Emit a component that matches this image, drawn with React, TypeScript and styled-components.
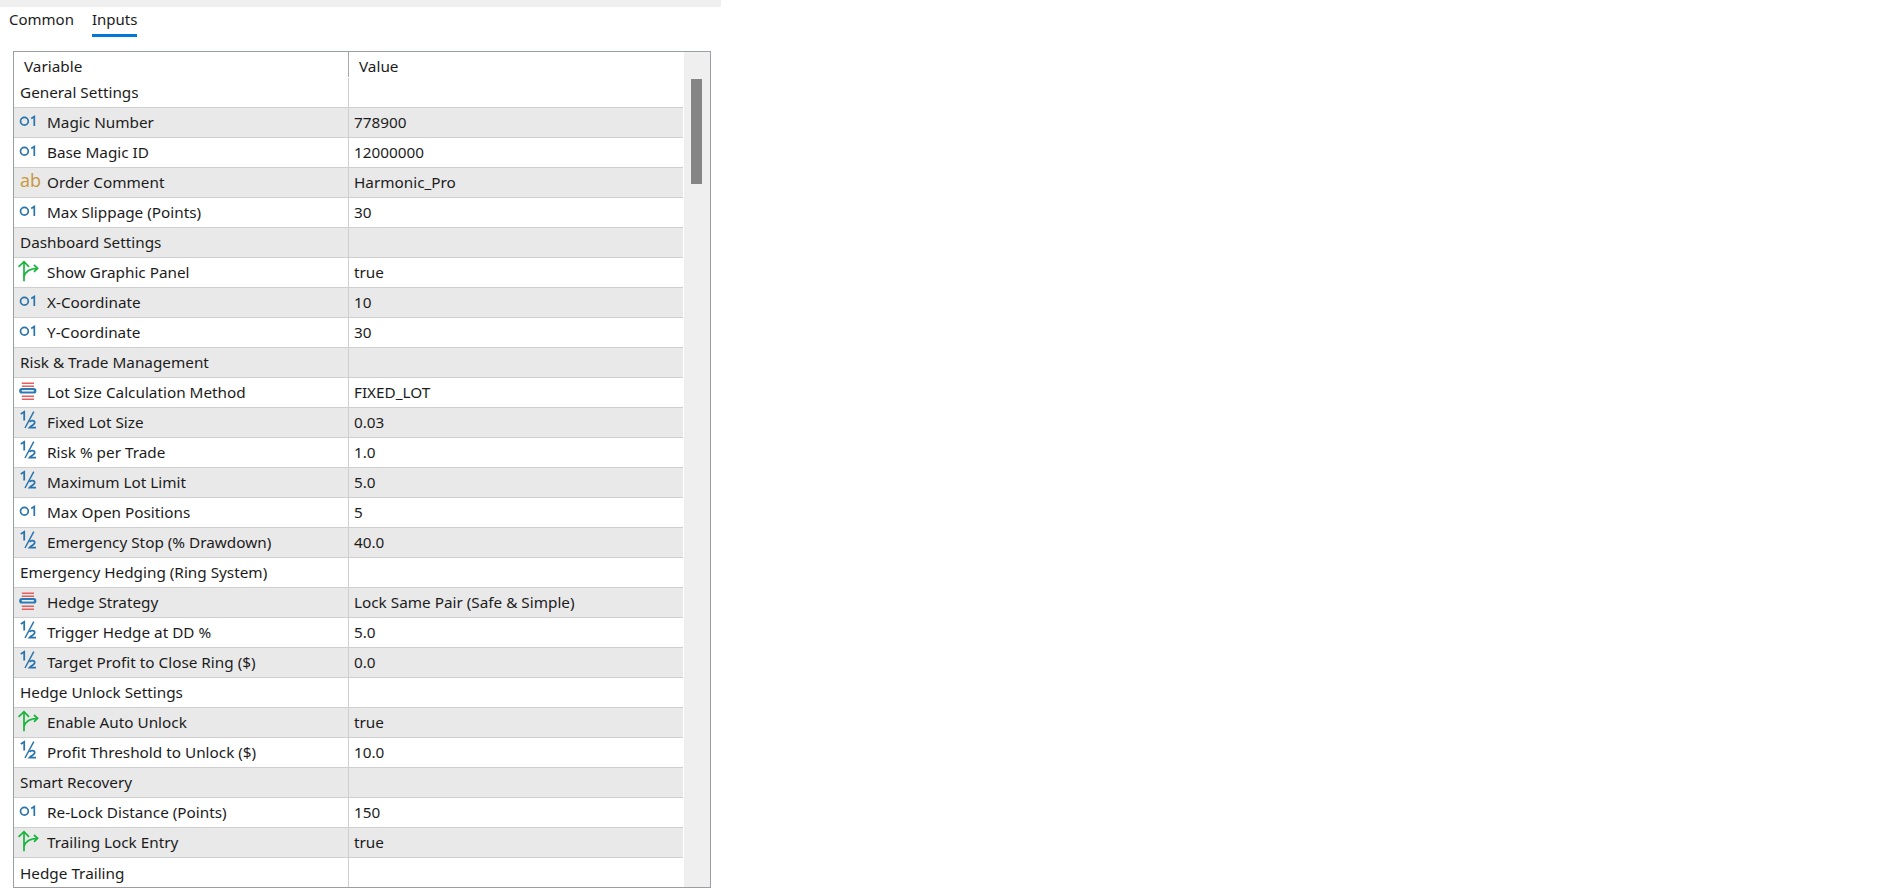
import React from 'react';
import styled, { createGlobalStyle } from 'styled-components';

type Kind = 'int' | 'text' | 'bool' | 'enum' | 'frac';

interface Item {
	label: string;
	value?: string;
	kind?: Kind;
}

const items: Item[] = [
	{ label: 'General Settings' },
	{ label: 'Magic Number', value: '778900', kind: 'int' },
	{ label: 'Base Magic ID', value: '12000000', kind: 'int' },
	{ label: 'Order Comment', value: 'Harmonic_Pro', kind: 'text' },
	{ label: 'Max Slippage (Points)', value: '30', kind: 'int' },
	{ label: 'Dashboard Settings' },
	{ label: 'Show Graphic Panel', value: 'true', kind: 'bool' },
	{ label: 'X-Coordinate', value: '10', kind: 'int' },
	{ label: 'Y-Coordinate', value: '30', kind: 'int' },
	{ label: 'Risk & Trade Management' },
	{ label: 'Lot Size Calculation Method', value: 'FIXED_LOT', kind: 'enum' },
	{ label: 'Fixed Lot Size', value: '0.03', kind: 'frac' },
	{ label: 'Risk % per Trade', value: '1.0', kind: 'frac' },
	{ label: 'Maximum Lot Limit', value: '5.0', kind: 'frac' },
	{ label: 'Max Open Positions', value: '5', kind: 'int' },
	{ label: 'Emergency Stop (% Drawdown)', value: '40.0', kind: 'frac' },
	{ label: 'Emergency Hedging (Ring System)' },
	{ label: 'Hedge Strategy', value: 'Lock Same Pair (Safe & Simple)', kind: 'enum' },
	{ label: 'Trigger Hedge at DD %', value: '5.0', kind: 'frac' },
	{ label: 'Target Profit to Close Ring ($)', value: '0.0', kind: 'frac' },
	{ label: 'Hedge Unlock Settings' },
	{ label: 'Enable Auto Unlock', value: 'true', kind: 'bool' },
	{ label: 'Profit Threshold to Unlock ($)', value: '10.0', kind: 'frac' },
	{ label: 'Smart Recovery' },
	{ label: 'Re-Lock Distance (Points)', value: '150', kind: 'int' },
	{ label: 'Trailing Lock Entry', value: 'true', kind: 'bool' },
	{ label: 'Hedge Trailing' },
];

function KindIcon({ kind }: { kind: Kind }): JSX.Element {
	if (kind === 'text') {
		return <AbGlyph>ab</AbGlyph>;
	}
	if (kind === 'int') {
		return (
			<svg width="20" height="20" viewBox="0 0 20 20" fill="none" stroke="#2a74ad" strokeWidth="1.7">
				<circle cx="4.4" cy="9.25" r="3.9" />
				<path d="M11.2 6.4 L14.3 4.6 V14" />
			</svg>
		);
	}
	if (kind === 'bool') {
		return (
			<svg width="22" height="24" viewBox="0 0 22 24" fill="none" stroke="#18b53c" strokeWidth="1.7">
				<path d="M4 21.3 V1.6 M-1.4 6.8 L4 1.6 L9 6.8" />
				<path d="M4 16.5 C5.5 11 9.5 8.5 17.6 8.3 M14 5 L17.6 8.3 L14 11.8" />
			</svg>
		);
	}
	if (kind === 'enum') {
		return (
			<svg width="20" height="22" viewBox="0 0 20 22" fill="none">
				<path d="M1.8 2.3 H14 M1.8 5.3 H14 M1.8 15.3 H14 M1.8 18.3 H14" stroke="#e2615f" strokeWidth="1.4" />
				<rect x="-0.8" y="7" width="17.2" height="5.6" rx="2.6" fill="#2a7ab5" />
				<rect x="1.8" y="9.1" width="12" height="1.4" fill="#ffffff" />
			</svg>
		);
	}
	return (
		<svg width="20" height="22" viewBox="0 0 20 22" fill="none" stroke="#2a74ad" strokeWidth="1.8">
			<path d="M0.8 3 L4.2 0.8 V9.6" />
			<path d="M13.8 0.6 L5 17" strokeWidth="1.5" />
			<path d="M9.6 11 C11 8.8 15 9.4 14.6 12 C14.2 13.8 11 15 9.6 16.6 H16" />
		</svg>
	);
}

export default function App(): JSX.Element {
	return (
		<Page>
			<GlobalStyle />
			<TopStrip />
			<Tabs>
				<Tab>Common</Tab>
				<Tab $active>Inputs</Tab>
			</Tabs>
			<Frame>
				<Table>
					<HeaderRow>
						<HeaderCell>Variable</HeaderCell>
						<HeaderCell>Value</HeaderCell>
					</HeaderRow>
					{items.map((item, index) => (
						<Row key={item.label} $shaded={index % 2 === 1}>
							<NameCell>
								{item.kind && (
									<IconSlot>
										<KindIcon kind={item.kind} />
									</IconSlot>
								)}
								{item.label}
							</NameCell>
							<ValueCell>{item.value}</ValueCell>
						</Row>
					))}
				</Table>
				<ScrollTrack>
					<ScrollThumb />
				</ScrollTrack>
			</Frame>
		</Page>
	);
}

const GlobalStyle = createGlobalStyle`
	html, body {
		margin: 0;
		padding: 0;
		background: #ffffff;
	}
	body {
		font-family: "Noto Sans", "Open Sans", sans-serif;
		font-size: 15.3px;
		color: #1c1c1c;
	}
`;

const Page = styled.div`
	width: 721px;
	height: 894px;
	overflow: hidden;
`;

const TopStrip = styled.div`
	height: 7px;
	background: #efefef;
`;

const Tabs = styled.nav`
	display: flex;
	gap: 18px;
	padding-left: 9px;
	height: 30px;
	margin-bottom: 14px;
	font-size: 15px;
`;

const Tab = styled.div<{ $active?: boolean }>`
	box-sizing: border-box;
	height: 30px;
	line-height: 24px;
	border-bottom: 3px solid ${(p) => (p.$active ? '#0078d7' : 'transparent')};
`;

const Frame = styled.div`
	box-sizing: border-box;
	width: 698px;
	height: 837px;
	margin-left: 13px;
	border: 1.5px solid #9b9ea6;
	display: flex;
	overflow: hidden;
`;

const Table = styled.div`
	width: 669px;
	flex: none;
`;

const HeaderRow = styled.div`
	display: grid;
	grid-template-columns: 334px 1fr;
	height: 26px;
`;

const HeaderCell = styled.div`
	padding: 1px 0 0 10px;
	line-height: 26px;
	height: 24px;
	& + & {
		border-left: 1px solid #a8a8a8;
	}
`;

const Row = styled.div<{ $shaded: boolean }>`
	box-sizing: border-box;
	display: grid;
	grid-template-columns: 334px 1fr;
	height: 30px;
	background: ${(p) => (p.$shaded ? '#e9e9e9' : '#ffffff')};
	border-bottom: 1.5px solid #cfcfcf;
	&:last-child {
		border-bottom: none;
	}
`;

const NameCell = styled.div`
	display: flex;
	align-items: center;
	padding: 0 0 1px 6px;
	white-space: nowrap;
`;

const IconSlot = styled.span`
	display: flex;
	align-items: center;
	width: 27px;
	height: 100%;
	flex: none;
	svg {
		overflow: visible;
	}
`;

const AbGlyph = styled.span`
	font-family: "Open Sans", sans-serif;
	font-size: 18px;
	color: #c8963c;
	line-height: 1;
	margin-top: -4px;
`;

const ValueCell = styled.div`
	display: flex;
	align-items: center;
	padding: 0 0 1px 5px;
	border-left: 1px solid #cfcfcf;
	white-space: nowrap;
`;

const ScrollTrack = styled.div`
	flex: 1;
	margin-left: 1px;
	background: #efefef;
	padding: 27px 8px 0 7px;
`;

const ScrollThumb = styled.div`
	height: 105px;
	background: #858585;
`;
